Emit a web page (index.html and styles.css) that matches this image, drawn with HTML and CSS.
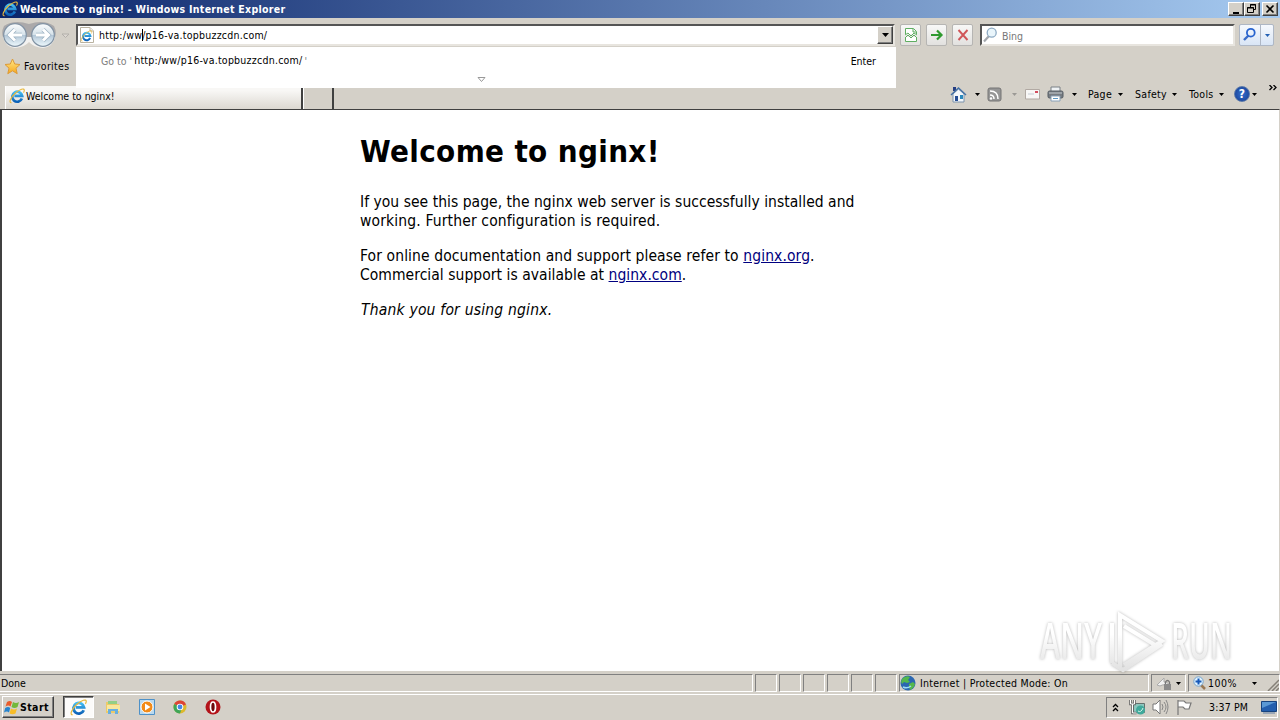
FILE: index.html
```html
<!DOCTYPE html>
<html lang="en">
<head>
<meta charset="utf-8">
<title>Welcome to nginx!</title>
<link rel="stylesheet" href="styles.css">
</head>
<body>
<svg class="defs" width="0" height="0">
  <defs>
    <linearGradient id="blue" x1="0" y1="0" x2="0" y2="1"><stop offset="0" stop-color="#45bdf2"/><stop offset="1" stop-color="#0d62b8"/></linearGradient>
    <linearGradient id="orb" x1="0" y1="0" x2="0" y2="1"><stop offset="0" stop-color="#fbfdfe"/><stop offset=".48" stop-color="#d6e2ea"/><stop offset=".52" stop-color="#b4c8d8"/><stop offset="1" stop-color="#eef9fd"/></linearGradient>
    <linearGradient id="gold" x1="0" y1="0" x2="0" y2="1"><stop offset="0" stop-color="#ffe98a"/><stop offset="1" stop-color="#f7a71c"/></linearGradient>
    <linearGradient id="fade" gradientUnits="userSpaceOnUse" x1="0" y1="10" x2="0" y2="62"><stop offset=".35" stop-color="#fff"/><stop offset="1" stop-color="#e3e3e3"/></linearGradient>
    <symbol id="ie" viewBox="0 0 16 16">
      <path d="M12.9 10.6A5 5 0 1 1 13.2 7.9H5.4" fill="none" stroke="url(#blue)" stroke-width="2.7"/>
      <path d="M2.6 14.8C-.6 15.2 1.3 9.6 6.5 5C11 1 15.2-.1 15.3 2.2C15.3 3 15 3.8 14.5 4.6" fill="none" stroke="#e8b83c" stroke-width="1.1"/>
    </symbol>
    <symbol id="down" viewBox="0 0 5 3"><path d="M0 0h5L2.5 3z"/></symbol>
  </defs>
</svg>
<div class="window">
  <header class="titlebar">
    <svg class="i16" viewBox="0 0 16 16"><use href="#ie"/></svg>
    <span class="title">Welcome to nginx! - Windows Internet Explorer</span>
    <div class="winbtns">
      <span class="winbtn"><svg width="12" height="10"><path d="M3 8h6v2H3z"/></svg></span>
      <span class="winbtn"><svg width="12" height="10" fill="none" stroke="#000"><path d="M4.500 3V.5h5v5H8M4 1h6M1.500 3.500h6v5h-6zM1 4h7"/></svg></span>
      <span class="winbtn close"><svg width="12" height="10"><path d="M2.500 1.500l7 7M9.500 1.500l-7 7" stroke="#000" stroke-width="1.600"/></svg></span>
    </div>
  </header>

  <div class="navbar">
    <svg class="orbs" width="58" height="30" viewBox="0 0 58 30">
      <path d="M4 6Q14-1 29 4Q44-1 54 6Q57 12 55 17H3Q1 12 4 6z" fill="#8f8f96" opacity=".6"/>
      <path d="M3 17H55Q53 27 43 28Q33 27 29 22Q25 27 15 28Q5 27 3 17z" fill="#f3f2f0"/>
      <g stroke="#8293a4" stroke-width="1.200" fill="url(#orb)"><circle cx="15" cy="15" r="11.300"/><circle cx="43" cy="15" r="11.300"/></g>
      <path d="M22 15H10M15 9.500L9.500 15L15 20.500M36 15H48M43 9.500L48.500 15L43 20.500" fill="none" stroke="#9db2c3" stroke-width="4.400"/>
      <path d="M22 15H10M15 9.500L9.500 15L15 20.500M36 15H48M43 9.500L48.500 15L43 20.500" fill="none" stroke="#fff" stroke-width="3"/>
    </svg>
    <svg class="recent" width="9" height="6"><path d="M1 1h7L4.500 4.500z" fill="#ddd8d2" stroke="#b3b0ab"/></svg>
    <div class="address">
      <svg class="i16" viewBox="0 0 16 16"><path d="M1.500.5h9.500l3.500 3.500v11.500h-13z" fill="#fff" stroke="#b9b2a0"/><path d="M11 .5v3.500h3.500" fill="#eee" stroke="#c5bda8"/><use href="#ie" x="1.500" y="3" width="12" height="12"/></svg>
      <span class="url">http:/ww<i class="caret"></i>/p16-va.topbuzzcdn.com/</span>
      <span class="combo"><svg width="7" height="4"><path d="M0 0h7L3.500 4z"/></svg></span>
    </div>
    <div class="tools">
      <span class="tool"><svg width="16" height="16" fill="none" stroke="#5fae62"><path d="M2.500 7V1.500h8l3 3V7M2.500 10v4.500h11V10M10 2v3h3" fill="#fff"/><path d="M2 8l3-2 3 3 3-3 3 2M2 11l3-3 3 3 3-3 3 3" stroke-width="1"/></svg></span>
      <span class="tool"><svg width="16" height="16"><path d="M2 8h10M8 3.500l4.500 4.500L8 12.500" fill="none" stroke="#2f9a2f" stroke-width="2.200"/></svg></span>
      <span class="tool"><svg width="16" height="16"><path d="M3.500 3l9 10M12.500 3l-9 10" stroke="#d05558" stroke-width="1.900"/></svg></span>
    </div>
    <div class="search">
      <svg class="i16" viewBox="0 0 16 16" fill="none"><path d="M7 9L2 14.500" stroke="#a3a7ad" stroke-width="2.200"/><circle cx="9.700" cy="5.700" r="4.500" fill="#e9f5fb" stroke="#8eabc4" stroke-width="1.300"/></svg>
      <span class="bing">Bing</span>
    </div>
    <div class="go">
      <svg width="20" height="20" fill="none"><path d="M8.500 10.500l-4.500 4.500" stroke="#3a6cc8" stroke-width="2.400"/><circle cx="10.800" cy="7.700" r="3.900" stroke="#2864cf" stroke-width="1.800"/></svg>
      <span class="godrop"><svg width="5" height="3" fill="#2360b4"><use href="#down"/></svg></span>
    </div>
  </div>

  <div class="commands">
    <div class="left">
      <div class="favorites">
        <svg width="17" height="17" viewBox="0 0 17 17"><path d="M8.500 1l2.200 5 5.300.5-4 3.700 1.200 5.500-4.700-2.900-4.700 2.900L5 10.200 1 6.500 6.300 6z" fill="url(#gold)" stroke="#dc9a38"/></svg>
        <span class="t-fav">Favorites</span>
      </div>
      <div class="tabs">
        <div class="tab"><svg class="i16" viewBox="0 0 16 16"><use href="#ie"/></svg><span class="t-tab">Welcome to nginx!</span></div>
        <div class="newtab"></div>
      </div>
    </div>
    <div class="menu">
      <svg class="m-home" width="17" height="17"><path d="M3 1h3v4H3z" fill="#263e82"/><path d="M3 8l5.500-5L14 8v8H3z" fill="#f3f7fb" stroke="#7c93ac"/><path d="M1 9l7.500-7L16 9" fill="none" stroke="#4672a6" stroke-width="1.500"/><path d="M5 10h3v5H5z" fill="#254d94"/><path d="M10 9h3v4h-3z" fill="#2b89bc"/></svg>
      <svg class="m-d1" width="5" height="3"><use href="#down"/></svg>
      <svg class="m-rss" width="15" height="15" fill="none"><rect x="1" y="1" width="13" height="13" rx="2" fill="#969696" stroke="#757575"/><path d="M3 4q8 0 8 8M3 8q4 0 4 4" stroke="#fff" stroke-width="1.500"/><circle cx="4" cy="11.500" r="1.200" fill="#fff"/></svg>
      <svg class="m-d2" width="5" height="3" fill="#9b9995"><use href="#down"/></svg>
      <svg class="m-mail" width="15" height="11"><path d="M.5.5h14v9.500H.5z" fill="#f8f7f6" stroke="#b1a9a3"/><path d="M10 2h3v2h-3z" fill="#d44d5e"/><path d="M3 5h6" stroke="#c5cbd2"/></svg>
      <svg class="m-print" width="17" height="16"><path d="M4 1h9v5H4z" fill="#eff2f4" stroke="#7b8086"/><rect x="1" y="5" width="15" height="7" rx="1.500" fill="#777c82" stroke="#555c64"/><path d="M2 7h13" stroke="#c5cbd0"/><path d="M4 10h9v5H4z" fill="#fff" stroke="#879fb6"/><path d="M6 12.500h5" stroke="#5b97c5"/></svg>
      <svg class="m-d3" width="5" height="3"><use href="#down"/></svg>
      <span class="t-page">Page</span><svg class="m-d4" width="5" height="3"><use href="#down"/></svg>
      <span class="t-safety">Safety</span><svg class="m-d4" width="5" height="3"><use href="#down"/></svg>
      <span class="t-tools">Tools</span><svg class="m-d4" width="5" height="3"><use href="#down"/></svg>
      <span class="help">?</span><svg class="m-d5" width="5" height="3"><use href="#down"/></svg>
      <svg class="m-more" width="8" height="6" fill="none" stroke="#000" stroke-width="1.300"><path d="M.5 0L3 2.500.5 5M4.500 0L7 2.500 4.500 5"/></svg>
    </div>
    <div class="suggest">
      <div class="srow"><span class="goto">Go to '</span><span class="surl">http:/ww/p16-va.topbuzzcdn.com/</span><span class="quote">'</span><span class="enter">Enter</span></div>
      <svg class="expand" width="9" height="6"><path d="M1 .5h7L4.500 4.500z" fill="#fff" stroke="#999"/></svg>
    </div>
  </div>

  <main class="page">
    <article>
      <h1>Welcome to nginx!</h1>
      <p><span class="l1">If you see this page, the nginx web server is successfully installed and</span><br><span class="l2">working. Further configuration is required.</span></p>
      <p><span class="l3">For online documentation and support please refer to <a>nginx.org</a>.</span><br><span class="l4">Commercial support is available at <a>nginx.com</a>.</span></p>
      <p><em>Thank you for using nginx.</em></p>
    </article>
    <svg class="mark" width="220" height="76" viewBox="0 0 220 76">
      <g class="wm">
        <text x="7" y="53" textLength="62" lengthAdjust="spacingAndGlyphs">ANY</text>
        <text x="138" y="53" textLength="61" lengthAdjust="spacingAndGlyphs">RUN</text>
        <path d="M87 61V9L129 35L91 59M91 20L122 39M79 57V17M79 57L90 64L129 38" fill="none" stroke="url(#fade)" stroke-width="4"/>
      </g>
    </svg>
  </main>

  <div class="status">
    <div class="cell done"><span class="t-done">Done</span></div>
    <div class="cell sm"></div><div class="cell sm"></div><div class="cell sm"></div><div class="cell sm"></div><div class="cell sm"></div><div class="cell sm"></div>
    <div class="cell zone"><svg width="16" height="16"><circle cx="8" cy="8" r="7.500" fill="#2b67b1"/><path d="M3 3q4-3 7-1L8 5l2 2-3 1-3-1-2 2Q0 6 3 3M9 9l4-2 2 2q-1 4-5 6l-1-3z" fill="#54b84c"/><path d="M3 12q4 2 8-1" stroke="#9ddcf2" stroke-width="1.500" fill="none"/></svg><span class="t-zone">Internet | Protected Mode: On</span></div>
    <div class="cell lock"><svg width="17" height="15"><path d="M1 9l7-7v4q5 0 6 5Q9 7 4 10z" fill="#f1f1f1" stroke="#aaa"/><rect x="8" y="8" width="7" height="6" fill="#8b8b8b"/><path d="M9.500 8V6q2-3 4 0v2" fill="none" stroke="#777" stroke-width="1.300"/></svg><svg width="5" height="3"><use href="#down"/></svg></div>
    <div class="cell zoomc"><svg width="14" height="15" fill="none"><path d="M8 9l4 4" stroke="#9a7855" stroke-width="2.500"/><circle cx="5.500" cy="5.500" r="4.700" fill="#dff2ff" stroke="#77a4cc"/><path d="M5.500 2.500v6M2.500 5.500h6" stroke="#1658b8" stroke-width="2"/></svg><span class="t-zoom">100%</span><svg class="zd" width="5" height="3"><use href="#down"/></svg>
      <svg class="grip" width="12" height="12"><path d="M1 12L12 1M5 12L12 5M9 12L12 9" stroke="#858078" stroke-width="1.500"/></svg></div>
  </div>

  <footer class="taskbar">
    <div class="start"><svg width="16" height="16"><path d="M3 3q3-2 5 0L6.500 7.500q-2-2-5 0z" fill="#e95c2b"/><path d="M9 3q3 2 6 0l-1.500 5q-3 2-6 0z" fill="#72b83b"/><path d="M1.200 9q3-2 5 0L5 13.500q-2-2-5 0z" fill="#2684ce"/><path d="M7 9.500q3 2 6 0l-1.500 5q-3 1.500-6 0z" fill="#f8bd28"/></svg><span class="t-start">Start</span></div>
    <div class="task"><svg width="17" height="17"><use href="#ie"/></svg></div>
    <div class="quick">
      <svg width="16" height="16"><path d="M1 3h5l1 2h7v9H1z" fill="#ecca68"/><path d="M3 2h9v3H3z" fill="#92cf86"/><path d="M2 6h13v6H2z" fill="#f8e79e"/><path d="M3 15v-5h10v5h-3v-3H6v3z" fill="#68afe0"/></svg>
      <svg width="16" height="16"><path d="M.5.500h15v15H.5z" fill="#b9d9ef" stroke="#4e91c8"/><circle cx="8" cy="8" r="6" fill="#f28a17" stroke="#fff"/><path d="M6 4.500L11.500 8 6 11.500z" fill="#fff"/></svg>
      <svg width="14" height="14" viewBox="0 0 14 14"><circle cx="7" cy="7" r="6.500" fill="#ddb92c"/><path d="M7 7L1.200 4A6.500 6.500 0 0 1 13 4.500z" fill="#dc4437"/><path d="M7 7L1.200 4A6.500 6.500 0 0 0 7 13.500L9 8z" fill="#3fa557"/><circle cx="7" cy="7" r="3.300" fill="#fff"/><circle cx="7" cy="7" r="2.400" fill="#4487e5"/></svg>
      <svg width="16" height="16"><circle cx="8" cy="8" r="7.500" fill="#b3131a"/><ellipse cx="8" cy="8" rx="2.500" ry="5" fill="#6c080c" stroke="#fff" stroke-width="1.700"/></svg>
    </div>
    <div class="tray">
      <svg class="chev" width="7" height="9" fill="none" stroke="#000" stroke-width="1.300"><path d="M1 4L3.500 1.500 6 4M1 8l2.500-2.500L6 8"/></svg>
      <svg class="net" width="17" height="17"><path d="M4.500 4.500h11v9h-11z" fill="#8bc6bd" stroke="#64706d"/><path d="M1.500 1v4h4V1M3.500 5v9h4" fill="none" stroke="#666" stroke-width="2.600"/><path d="M1.500 1v4h4V1M3.500 5v9h4" fill="none" stroke="#fff"/><circle cx="11.500" cy="11" r="4.500" fill="#40a99b"/><path d="M9 12q3 2 5-3" stroke="#d8f3ea" fill="none"/></svg>
      <svg class="vol" width="17" height="16" fill="none"><path d="M1 5h3l4-4v14l-4-4H1z" fill="#fff" stroke="#777"/><path d="M10 5q2 3 0 6M12 3q4 5 0 10M14 1q4 7 0 14" stroke="#878787"/></svg>
      <svg class="flag" width="16" height="16"><path d="M2 1v15M2 2h6l2 2h5l-2 6H9L7 8H2" fill="#fff" stroke="#777" stroke-width="1.200"/></svg>
      <span class="t-time">3:37 PM</span>
      <svg class="desk" width="16" height="13"><path d="M.5.5h15v10H.5z" fill="#245fae" stroke="#18447f"/><path d="M1 1h14L1 7z" fill="#5b99d5"/><path d="M2 12h12" stroke="#617fa5"/></svg>
    </div>
  </footer>
</div>
</body>
</html>
```
FILE: styles.css
```css
* { box-sizing: border-box; }
body { margin: 0; overflow: hidden; background: #d4d0c8; color: #000; font-family: "DejaVu Sans Condensed", "DejaVu Sans", sans-serif; font-stretch: condensed; font-size: 10.5px; }
svg { display: block; flex: none; }
span { white-space: nowrap; }
.defs { position: absolute; }
.i16 { width: 16px; height: 16px; }
.window { width: 1280px; height: 720px; display: flex; flex-direction: column; }
.titlebar { height: 18px; flex: none; display: flex; align-items: center; padding: 0 2px; background: linear-gradient(90deg, #0a246a, #a6caf0); color: #fff; font-weight: bold; }
.title { margin-left: 2px; letter-spacing: .28px; }
.winbtns { margin-left: auto; display: flex; }
.winbtn { width: 16px; height: 14px; padding: 1px; background: #d4d0c8; border: 1px solid; border-color: #fff #404040 #404040 #fff; box-shadow: inset -1px -1px #808080; }
.close { margin-left: 2px; }
.navbar { height: 34px; flex: none; display: flex; align-items: flex-start; }
.orbs { margin-top: 2px; }
.recent { margin: 15px 0 0 3px; }
.address { margin: 6px 0 0 6px; width: 819px; height: 22px; border: 2px solid; border-color: #555 #e8e5df #e8e5df #555; background: #fff; display: flex; align-items: center; padding-left: 1px; }
.url { margin-left: 4px; letter-spacing: .24px; }
.caret { display: inline-block; width: 1px; height: 12px; margin: 0 -1px 0 0; background: #000; vertical-align: -2px; }
.combo { width: 16px; height: 18px; margin-left: auto; background: #d4d0c8; border: 1px solid; border-color: #fff #404040 #404040 #fff; box-shadow: inset -1px -1px #808080; display: grid; place-items: center; }
.tools { display: flex; gap: 5px; margin: 6px 0 0 5px; }
.tool { width: 21px; height: 22px; border: 1px solid #b6b5b3; border-radius: 2px; background: linear-gradient(#f8f8f7, #e2e1df); display: grid; place-items: center; }
.search { margin: 6px 0 0 7px; width: 255px; height: 22px; border: 2px solid; border-color: #555 #e8e5df #e8e5df #555; background: #fff; display: flex; align-items: center; color: #777; }
.bing { margin: 2px 0 0 4px; }
.go { margin: 6px 0 0 4px; width: 35px; height: 22px; border: 1px solid #aeb7c5; border-radius: 2px; background: linear-gradient(#f6f9fe, #d9e5f5); display: flex; }
.godrop { width: 13px; border-left: 1px solid #aeb7c5; display: grid; place-items: center; }
.commands { position: relative; height: 57px; flex: none; display: flex; }
.left { width: 340px; }
.favorites { height: 34px; display: flex; align-items: center; padding: 0 0 6px 4px; }
.t-fav { margin-left: 3px; letter-spacing: .32px; }
.tabs { height: 23px; display: flex; padding-left: 5px; }
.tab { width: 298px; background: linear-gradient(#f8f7f5 20%, #dcd8d1); border-left: 1px solid #fff; border-right: 2px solid #404040; display: flex; align-items: center; padding: 0 0 3px 3px; }
.t-tab { margin-left: 1px; }
.newtab { width: 31px; border-left: 1px solid #fff; border-right: 2px solid #404040; }
.menu { width: 940px; display: flex; align-items: center; padding: 27px 0 0 610px; }
.m-d1 { margin-left: 8px; } .m-rss { margin-left: 7px; } .m-d2 { margin-left: 10px; }
.m-mail { margin-left: 8px; } .m-print { margin-left: 7px; } .m-d3 { margin-left: 8px; }
.t-page { margin-left: 11px; width: 25px; letter-spacing: .3px; }
.t-safety { margin-left: 12px; width: 32px; letter-spacing: .3px; }
.t-tools { margin-left: 12px; width: 25px; letter-spacing: .3px; }
.m-d4 { margin-left: 5px; }
.help { margin-left: 10px; width: 16px; height: 16px; border-radius: 50%; border: 1px solid #5a78a8; background: radial-gradient(#346fcc, #153c91); color: #fff; font-weight: bold; font-size: 12px; line-height: 14px; text-align: center; }
.m-d5 { margin-left: 2px; }
.m-more { margin: -13px 0 0 12px; }
.suggest { position: absolute; left: 76px; top: -5px; width: 820px; height: 41px; background: #fff; }
.srow { display: flex; align-items: center; padding: 7px 20px 0 25px; line-height: 14px; }
.goto, .quote { color: #808080; }
.surl { margin: -2px 0 0 2px; letter-spacing: .24px; } .quote { margin-left: 2px; }
.enter { margin-left: auto; }
.expand { margin: 9px 0 0 401px; }
.page { position: relative; height: 562px; flex: none; border: solid #404040; border-width: 1px 0 0 2px; border-right: 1px solid #d4d0c8; background: #fff; }
article { width: 560px; margin-left: 358px; font-size: 15.5px; line-height: 19px; padding-top: 21px; }
h1 { margin: 0 0 22px; font-size: 31px; line-height: 40px; letter-spacing: .36px; }
p { margin: 0 0 16px; }
.l1 { letter-spacing: .03px; }
.l2 { letter-spacing: .14px; }
.l3 { letter-spacing: .1px; }
.l4 { letter-spacing: .04px; }
em { margin-left: 1px; letter-spacing: .2px; }
a { color: #000080; text-decoration: underline; }
.mark { position: absolute; left: 1031px; top: 496px; }
.wm { filter: drop-shadow(0 0 1.5px rgba(0,0,0,.28)); fill: url(#fade); font: 600 50px "Open Sans", sans-serif; }
.status { height: 23px; flex: none; border-top: 1px solid #d4d0c8; display: flex; padding: 2px 0; gap: 2px; }
.cell { height: 18px; border: 1px solid; border-color: #808080 #fff #fff #808080; display: flex; align-items: center; }
.done { width: 753px; border-left: 0; padding-left: 1px; }
.sm { width: 22px; }
.zone { width: 250px; } .t-zone { margin-left: 4px; letter-spacing: .27px; }
.lock { width: 35px; padding-left: 4px; gap: 3px; }
.zoomc { flex: 1; padding-left: 4px; } .t-zoom { margin-left: 1px; letter-spacing: .5px; }
.zd { margin-left: 15px; } .grip { margin: 4px 0 0 auto; }
.taskbar { height: 26px; flex: none; border-top: 1px solid #fff; display: flex; align-items: center; padding-bottom: 1px; }
.start { margin-left: 2px; width: 52px; height: 22px; border: 1px solid; border-color: #fff #404040 #404040 #fff; box-shadow: inset -1px -1px #808080; display: flex; align-items: center; padding-left: 1px; font-weight: bold; letter-spacing: .4px; }
.task { margin-left: 9px; width: 31px; height: 22px; border: 1px solid; border-color: #404040 #fff #fff #404040; box-shadow: inset 1px 1px #808080; background: #fcfbfa; display: grid; place-items: center; }
.quick { margin-left: 11px; display: flex; align-items: center; gap: 18px; }
.tray { margin: 0 2px 0 auto; width: 172px; height: 21px; border: 1px solid; border-color: #808080 #fff #fff #808080; display: flex; align-items: center; padding-left: 5px; }
.net { margin-left: 10px; } .vol { margin-left: 6px; } .flag { margin-left: 7px; } .t-time { margin-left: 17px; letter-spacing: .15px; } .desk { margin-left: auto; }
```
